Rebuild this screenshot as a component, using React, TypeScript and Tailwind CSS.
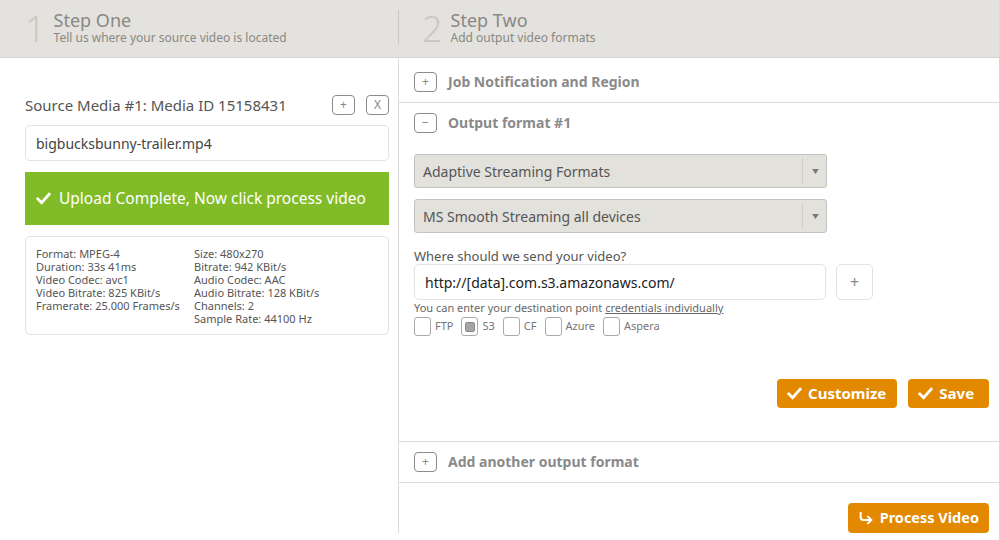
import React from "react";
import { CornerDownRight } from "lucide-react";

const font = { fontFamily: '"Noto Sans", "Open Sans", sans-serif' };

const Check = ({ className = "" }: { className?: string }) => (
  <svg viewBox="0 0 16 16" className={className} fill="none">
    <path d="M2 8.5 L6 12.5 L14 3.5" stroke="currentColor" strokeWidth="3" strokeLinecap="square" />
  </svg>
);

const SmallBox = ({ children }: { children: React.ReactNode }) => (
  <span className="flex h-[20px] w-[23px] items-center justify-center rounded-[4px] border border-[#8c8c8c] text-[12px] leading-none text-[#888]">
    {children}
  </span>
);

const SectionRow = ({ sign, label, className = "" }: { sign: string; label: string; className?: string }) => (
  <div className={"flex items-center gap-[11px] pl-[15px] " + className}>
    <SmallBox>{sign}</SmallBox>
    <span className="text-[14px] font-bold leading-none text-[#8a8a8a]">{label}</span>
  </div>
);

const SelectBox = ({ value }: { value: string }) => (
  <div className="flex h-[34px] w-[413px] items-center rounded-[3px] border border-[#c4c2bd] bg-[#e3e1dc] pl-[8px] text-[14px] text-[#555]">
    <span className="flex-1">{value}</span>
    <span className="mr-[2px] flex h-[26px] w-[22px] items-center justify-center border-l border-[#d0cec9]">
      <svg viewBox="0 0 8 6" className="ml-[4px] h-[5px] w-[7px]">
        <path d="M0 0 H8 L4 6 Z" fill="#777" />
      </svg>
    </span>
  </div>
);

const Checkbox = ({ label, checked = false }: { label: string; checked?: boolean }) => (
  <label className="flex items-center gap-[4px] text-[11px] text-[#777]">
    <span className="flex h-[19px] w-[17px] items-center justify-center rounded-[3px] border border-[#aaa] bg-white">
      {checked && <span className="h-[10px] w-[10px] rounded-[2px] border border-[#888] bg-[#a5a5a5]" />}
    </span>
    {label}
  </label>
);

const OrangeButton = ({ children }: { children: React.ReactNode }) => (
  <button className="flex h-[29px] items-center gap-[6px] rounded-[4px] bg-[#e38900] pl-[10px] pr-[11px] text-[15px] font-bold text-white">
    {children}
  </button>
);

const info: [string, string][] = [
  ["Format: MPEG-4", "Size: 480x270"],
  ["Duration: 33s 41ms", "Bitrate: 942 KBit/s"],
  ["Video Codec: avc1", "Audio Codec: AAC"],
  ["Video Bitrate: 825 KBit/s", "Audio Bitrate: 128 KBit/s"],
  ["Framerate: 25.000 Frames/s", "Channels: 2"],
  ["", "Sample Rate: 44100 Hz"],
];

const Step = ({ n, title, sub }: { n: string; title: string; sub: string }) => (
  <div className="flex items-center gap-[8px]">
    <span className="mt-[4px] text-[36px] font-light leading-none text-[#ccc8c0]">{n}</span>
    <div className="text-[#8a8882]">
      <div className="text-[18px] leading-[19px]">{title}</div>
      <div className="mt-[1px] text-[12px] leading-[13px]">{sub}</div>
    </div>
  </div>
);

export default function App() {
  return (
    <div style={font} className="h-[540px] w-[1000px] overflow-hidden bg-white">
      <div className="flex h-full w-full flex-col border-r border-[#d9d9d9]">
        {/* steps header */}
        <div className="flex h-[58px] shrink-0 border-b border-[#d6d5d1] bg-[#e3e2de] pb-[3px]">
          <div className="flex w-[398px] items-center pl-[25px]">
            <Step n="1" title="Step One" sub="Tell us where your source video is located" />
          </div>
          <div className="my-[10px] border-l border-[#c9c7c2]" />
          <div className="flex items-center pl-[23px]">
            <Step n="2" title="Step Two" sub="Add output video formats" />
          </div>
        </div>

        <div className="flex h-[475px]">
          {/* source */}
          <div className="w-[399px] shrink-0 border-r border-[#dcdcdc] pl-[25px] pr-[9px] pt-[37px]">
            <div className="flex h-[20px] items-center">
              <span className="flex-1 text-[15px] text-[#555]">Source Media #1: Media ID 15158431</span>
              <SmallBox>+</SmallBox>
              <span className="ml-[11px]">
                <SmallBox>X</SmallBox>
              </span>
            </div>
            <div className="mt-[10px] flex h-[36px] items-center rounded-[5px] border border-[#e2e2e2] px-[10px] text-[14px] text-[#444]">
              bigbucksbunny-trailer.mp4
            </div>
            <div className="mt-[11px] flex h-[53px] items-center gap-[8px] bg-[#81bc28] pl-[11px] text-[15.5px] text-white">
              <Check className="h-[15px] w-[15px]" />
              Upload Complete, Now click process video
            </div>
            <div className="mt-[11px] grid h-[99px] grid-cols-[158px_1fr] content-start rounded-[5px] border border-[#e2e2e2] px-[10px] pt-[10px] text-[11px] leading-[13px] text-[#555]">
              {info.map(([a, b], i) => (
                <React.Fragment key={i}>
                  <span className="whitespace-nowrap">{a}</span>
                  <span className="whitespace-nowrap">{b}</span>
                </React.Fragment>
              ))}
            </div>
          </div>

          {/* outputs */}
          <div className="flex-1">
            <SectionRow sign="+" label="Job Notification and Region" className="border-b border-[#dcdcdc] pb-[10px] pt-[14px]" />
            <div className="border-b border-[#dcdcdc] pb-[33px] pl-[15px] pr-[10px] pt-[10px]">
              <div className="flex items-center gap-[11px]">
                <SmallBox>−</SmallBox>
                <span className="text-[14px] font-bold leading-none text-[#8a8a8a]">Output format #1</span>
              </div>
              <div className="mt-[21px]">
                <SelectBox value="Adaptive Streaming Formats" />
              </div>
              <div className="mt-[11px]">
                <SelectBox value="MS Smooth Streaming all devices" />
              </div>
              <div className="mt-[15px] text-[13px] leading-[16px] text-[#555]">Where should we send your video?</div>
              <div className="flex gap-[10px]">
                <div className="flex h-[36px] w-[412px] items-center rounded-[5px] border border-[#e2e2e2] pl-[10px] text-[14px] text-[#222]">
                  http://[data].com.s3.amazonaws.com/
                </div>
                <div className="flex h-[36px] w-[37px] items-center justify-center rounded-[5px] border border-[#e2e2e2] text-[16px] text-[#888]">
                  +
                </div>
              </div>
              <div className="mt-[2px] text-[11px] leading-[12px] text-[#666]">
                You can enter your destination point <span className="underline">credentials individually</span>
              </div>
              <div className="mt-[3px] flex gap-[8px]">
                <Checkbox label="FTP" />
                <Checkbox label="S3" checked />
                <Checkbox label="CF" />
                <Checkbox label="Azure" />
                <Checkbox label="Aspera" />
              </div>
              <div className="mt-[43px] flex justify-end gap-[11px]">
                <OrangeButton>
                  <Check className="h-[15px] w-[15px]" />
                  Customize
                </OrangeButton>
                <OrangeButton>
                  <Check className="h-[15px] w-[15px]" />
                  Save&nbsp;
                </OrangeButton>
              </div>
            </div>
            <SectionRow sign="+" label="Add another output format" className="border-b border-[#dcdcdc] pb-[10px] pt-[10px]" />
            <div className="mt-[20px] flex justify-end pr-[10px]">
              <button className="flex h-[30px] items-center gap-[6px] rounded-[4px] bg-[#e38900] pl-[10px] pr-[10px] text-[14.5px] font-bold text-white">
                <CornerDownRight className="h-[16px] w-[16px]" strokeWidth={3} />
                Process Video
              </button>
            </div>
          </div>
        </div>
      </div>
    </div>
  );
}
